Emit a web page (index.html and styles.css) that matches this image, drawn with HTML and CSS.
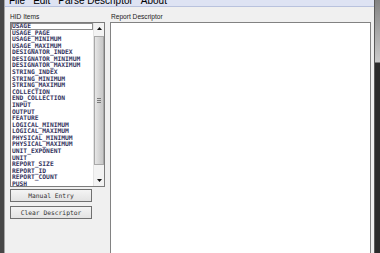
FILE: index.html
```html
<!DOCTYPE html>
<html lang="en">
<head>
    <meta charset="UTF-8">
    <title>HID Descriptor Tool</title>
    <link rel="stylesheet" href="styles.css">
</head>
<body>
    <div class="screen">
        <div class="frame-left"></div>

        <div class="app">
            <!-- Menu bar (top of it is cut off) -->
            <div class="menubar">
                <div class="menu-items">
                    <span>File</span>
                    <span>Edit</span>
                    <span>Parse Descriptor</span>
                    <span>About</span>
                </div>
            </div>

            <div class="content">
                <div class="side">
                    <div class="label">HID Items</div>
                    <div class="listbox">
                        <ul class="items">
                            <li class="focus">USAGE</li>
                            <li>USAGE_PAGE</li>
                            <li>USAGE_MINIMUM</li>
                            <li>USAGE_MAXIMUM</li>
                            <li>DESIGNATOR_INDEX</li>
                            <li>DESIGNATOR_MINIMUM</li>
                            <li>DESIGNATOR_MAXIMUM</li>
                            <li>STRING_INDEX</li>
                            <li>STRING_MINIMUM</li>
                            <li>STRING_MAXIMUM</li>
                            <li>COLLECTION</li>
                            <li>END_COLLECTION</li>
                            <li>INPUT</li>
                            <li>OUTPUT</li>
                            <li>FEATURE</li>
                            <li>LOGICAL_MINIMUM</li>
                            <li>LOGICAL_MAXIMUM</li>
                            <li>PHYSICAL_MINIMUM</li>
                            <li>PHYSICAL_MAXIMUM</li>
                            <li>UNIT_EXPONENT</li>
                            <li>UNIT</li>
                            <li>REPORT_SIZE</li>
                            <li>REPORT_ID</li>
                            <li>REPORT_COUNT</li>
                            <li>PUSH</li>
                        </ul>
                        <div class="scrollbar">
                            <div class="arrow">
                                <svg width="5" height="3" viewBox="0 0 5 3"><path d="M0 3 L2.5 0 L5 3 Z" fill="#111"/></svg>
                            </div>
                            <div class="track">
                                <div class="thumb">
                                    <div class="grip"></div>
                                </div>
                            </div>
                            <div class="arrow">
                                <svg width="5" height="3" viewBox="0 0 5 3"><path d="M0 0 L5 0 L2.5 3 Z" fill="#111"/></svg>
                            </div>
                        </div>
                    </div>
                    <button class="btn first">Manual Entry</button>
                    <button class="btn">Clear Descriptor</button>
                </div>

                <div class="report">
                    <div class="label">Report Descriptor</div>
                    <div class="report-box"></div>
                </div>
            </div>
        </div>

        <div class="frame-right"></div>
    </div>
</body>
</html>
```

FILE: styles.css
```css
/* Page */
body {
    margin: 0;
    background: #f0f0f0;
    font-family: 'Liberation Sans', Arial, sans-serif;
}

.screen {
    width: 380px;
    height: 253px;
    display: flex;
    overflow: hidden;
}

/* Window frames at the edges */
.frame-left {
    width: 4px;
    background: #474747;
    border-right: 1px solid #a5a5a5;
}

.frame-right {
    width: 5px;
    background: linear-gradient(to bottom, #838383 0, #cacaca 62px, #2b2b2b 63px);
    border-left: 1px solid #5a5a5a;
}

.app {
    flex: 1;
    display: flex;
    flex-direction: column;
    background: #f0f0f0;
}

/* Menu bar */
.menubar {
    flex-shrink: 0;
    height: 6px;
    background: #dee3f3;
    border-bottom: 1px solid #b9c2dd;
    overflow: hidden;
}

.menu-items {
    display: flex;
    gap: 8px;
    margin-top: -4px;
    padding-left: 4px;
    font-size: 10px;
    line-height: 10px;
    color: #000;
}

/* Main area */
.content {
    flex: 1;
    min-height: 0;
    display: flex;
    gap: 5px;
    padding: 0 3px 0 5px;
    overflow: hidden;
}

.label {
    height: 8px;
    padding-top: 6px;
    margin-bottom: 1px;
    font-size: 6.6px;
    line-height: 8px;
    color: #222;
}

.side {
    width: 95px;
    flex-shrink: 0;
}

.listbox {
    height: 163px;
    display: flex;
    border: 1px solid #7c7c7c;
    background: #fff;
}

.items {
    flex: 1;
    margin: 0;
    padding: 0;
    list-style: none;
    font-family: 'DejaVu Sans Mono', 'Liberation Mono', monospace;
    font-size: 6.3px;
    font-weight: bold;
    line-height: 6.58px;
    color: #34345e;
    overflow: hidden;
}

.items li {
    padding-left: 1px;
    white-space: nowrap;
}

.items li.focus {
    box-shadow: inset 0 0 0 1px #8c8c8c;
}

/* Scrollbar */
.scrollbar {
    width: 10px;
    display: flex;
    flex-direction: column;
    background: #f3f3f3;
    border-left: 1px solid #e4e4e4;
}

.arrow {
    height: 11px;
    display: flex;
    justify-content: center;
    align-items: center;
}

.track {
    flex: 1;
    padding-top: 2px;
}

.thumb {
    height: 129px;
    display: flex;
    justify-content: center;
    align-items: center;
    background: linear-gradient(to right, #e6e6e6, #d2d2d2 60%, #c8c8c8);
    border: 1px solid #a8a8a8;
    box-sizing: border-box;
}

.grip {
    width: 4px;
    height: 5px;
    background: repeating-linear-gradient(to bottom, #7a7a7a 0, #7a7a7a 1px, transparent 1px, transparent 2px);
}

/* Buttons */
.btn {
    display: block;
    width: 82px;
    height: 13px;
    margin-top: 4px;
    padding: 0;
    border: 1px solid #707070;
    background: linear-gradient(to bottom, #f4f4f4, #e3e3e3);
    font-family: 'DejaVu Sans Mono', 'Liberation Mono', monospace;
    font-size: 6.3px;
    color: #333;
}

.btn.first {
    margin-top: 2px;
}

/* Report descriptor box */
.report {
    flex: 1;
}

.report .label {
    padding-left: 1px;
}

.report-box {
    height: 240px;
    border: 1px solid #828282;
    background: #fff;
}
```
